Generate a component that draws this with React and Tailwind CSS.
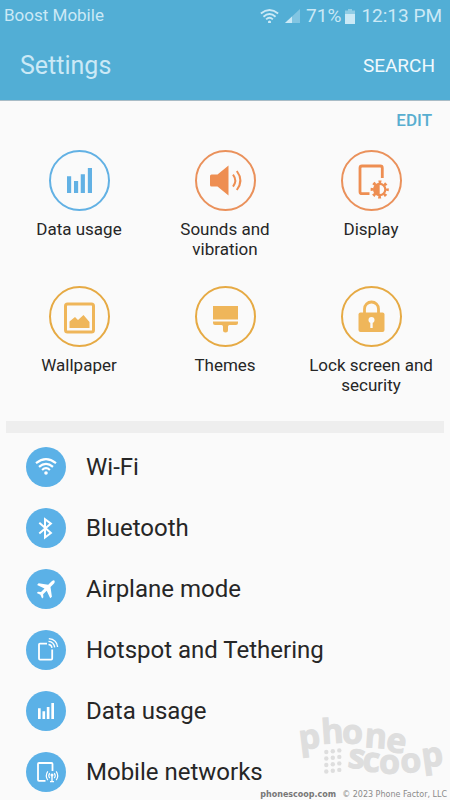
const WifiIcon = ({ className }) => (
    <svg viewBox="0 0 22 17" className={className} fill="none" stroke="currentColor" strokeWidth="2.2" aria-hidden="true">
        <path d="M1 5.2 Q11 -2.8 21 5.2" />
        <path d="M4 8.9 Q11 2.9 18 8.9" />
        <path d="M7.1 12 Q11 8.4 14.9 12" />
        <circle cx="11" cy="15" r="1.8" fill="currentColor" stroke="none" />
    </svg>
);

const BarsIcon = ({ className }) => (
    <svg viewBox="0 0 24 24" className={className} fill="currentColor" aria-hidden="true">
        <path d="M0 8h4v16H0zM6.7 12.5h4V24h-4zM13.2 6h4v18h-4zM20 0h4v24h-4z" />
    </svg>
);

const SoundIcon = () => (
    <svg viewBox="2 2 57 57" className="size-full text-[#ee8e52]" fill="none" stroke="currentColor" strokeWidth="2" aria-hidden="true">
        <path d="M16.5 24.5h6L33.5 15.5v30L22.5 36.5h-6a1.5 1.5 0 0 1-1.5-1.5v-9a1.5 1.5 0 0 1 1.5-1.5z" fill="currentColor" stroke="none" />
        <path d="M38 24.6q4.6 6 0 12M41.8 21q7.2 9.5 0 19" />
    </svg>
);

const DisplayIcon = () => (
    <svg viewBox="2 2 57 57" className="size-full text-[#ee8e52]" fill="none" stroke="currentColor" strokeWidth="2.8" aria-hidden="true">
        <path d="M28.5 43.7H21a2 2 0 0 1-2-2V18a2 2 0 0 1 2-2h18.3a2 2 0 0 1 2 2V28" />
        <circle cx="38.7" cy="39.5" r="5.6" strokeWidth="2.2" />
        <circle cx="38.7" cy="39.5" r="7.6" strokeWidth="3" strokeDasharray="2.8 3.169" strokeDashoffset="1.4" />
        <path d="M38.7 33.9a5.6 5.6 0 0 0 0 11.2z" fill="currentColor" stroke="none" />
    </svg>
);

const WallpaperIcon = () => (
    <svg viewBox="2 2 57 57" className="size-full text-[#efb65a]" fill="none" stroke="currentColor" aria-hidden="true">
        <rect x="16.5" y="18" width="28" height="28" rx="2" strokeWidth="3" />
        <path d="M20.5 35.500l5.500-4.500 3 3 5.500-5 6 7v6H20.500z" fill="currentColor" stroke="none" />
    </svg>
);

const ThemesIcon = () => (
    <svg viewBox="2 2 57 57" className="size-full text-[#efb65a]" fill="currentColor" aria-hidden="true">
        <path d="M18 20h25v13.500H18zM18 35.500h25v1.500a2 2 0 0 1-2 2h-6.500a1.500 1.500 0 0 0-1.500 1.500V44a2.500 2.500 0 0 1-5 0v-3.500a1.500 1.500 0 0 0-1.500-1.500H20a2 2 0 0 1-2-2z" />
    </svg>
);

const LockIcon = () => (
    <svg viewBox="2 2 57 57" className="size-full text-[#efb65a]" fill="none" stroke="currentColor" aria-hidden="true">
        <path d="M23.5 28v-5a7 7 0 0 1 14 0v5" strokeWidth="2.8" />
        <rect x="17.5" y="26.5" width="26" height="19.5" rx="2" fill="currentColor" stroke="none" />
        <circle cx="30.5" cy="34" r="3" fill="#fafafa" stroke="none" />
        <path d="M30.5 35v7" stroke="#fafafa" strokeWidth="2.4" />
    </svg>
);

const BluetoothIcon = () => (
    <svg viewBox="0 0 40 40" className="size-full" fill="none" stroke="currentColor" strokeWidth="2" strokeLinejoin="miter" aria-hidden="true">
        <path d="M13.3 14.800L24.900 25l-5.900 4.500V11.200l5.900 4.400L13.300 25.600" />
    </svg>
);

const PlaneIcon = () => (
    <svg viewBox="0 0 40 40" className="size-full" fill="currentColor" aria-hidden="true">
        <path d="M28.3 11.400c.9 1 .3 2.500-.8 3.600l-3 3 1.400 9.700-1.700 1.500-3.500-7.500-3.600 3.500.3 3-1.300 1.200-1.700-3.600-3.600-1.700 1.200-1.300 3 .3 3.500-3.600-7.400-3.500 1.500-1.700 9.600 1.400 3-3c1-1 2.300-2 3.100-1.300z" />
    </svg>
);

const HotspotIcon = () => (
    <svg viewBox="0 0 40 40" className="size-full" fill="none" stroke="currentColor" strokeWidth="1.8" aria-hidden="true">
        <path d="M21 13.600h-7a1 1 0 0 0-1 1v14a1 1 0 0 0 1 1h11.200a1 1 0 0 0 1-1V19.500" />
        <path d="M22.5 14.500q3 .2 3.500 3.300M22.500 11.400q5.500.5 6.200 6M22.800 8.600q8 .7 8.800 8.400" strokeWidth="1.4" />
    </svg>
);

const NetworkIcon = () => (
    <svg viewBox="0 0 40 40" className="size-full" fill="none" stroke="currentColor" strokeWidth="1.8" aria-hidden="true">
        <path d="M19.5 28.800H13a1 1 0 0 1-1-1V12a1 1 0 0 1 1-1h12.500a1 1 0 0 1 1 1v7" />
        <path d="M23.7 21.200q-1.800 2.500 0 5M28.300 21.200q1.800 2.500 0 5M21.800 19.300q-3 4.400 0 8.800M30.200 19.300q3 4.400 0 8.800" strokeWidth="1.2" />
        <circle cx="26" cy="23" r="1.5" fill="currentColor" stroke="none" />
        <path d="M26 23v6.500M24 29.600h4" strokeWidth="1.4" />
    </svg>
);

const quickSettings = [
    { label: "Data usage", ring: "border-[#62b1e4] text-[#62b1e4]", icon: <BarsIcon className="mx-auto mt-4 size-[25px]" /> },
    { label: "Sounds and vibration", ring: "border-[#ea915b]", icon: <SoundIcon /> },
    { label: "Display", ring: "border-[#ea915b]", icon: <DisplayIcon /> },
    { label: "Wallpaper", ring: "border-[#e6aa44]", icon: <WallpaperIcon /> },
    { label: "Themes", ring: "border-[#e6aa44]", icon: <ThemesIcon /> },
    { label: "Lock screen and security", ring: "border-[#e6aa44]", icon: <LockIcon /> },
];

const settings = [
    { label: "Wi-Fi", icon: <WifiIcon className="w-[22px]" /> },
    { label: "Bluetooth", icon: <BluetoothIcon /> },
    { label: "Airplane mode", icon: <PlaneIcon /> },
    { label: "Hotspot and Tethering", icon: <HotspotIcon /> },
    { label: "Data usage", icon: <BarsIcon className="size-4" /> },
    { label: "Mobile networks", icon: <NetworkIcon /> },
];

const StatusBar = () => (
    <div className="flex h-8 items-center justify-between pr-2 pl-1 text-[#cbe9f6]">
        <span className="text-[17px]">Boost Mobile</span>
        <div className="flex items-center gap-1.5 text-[19px]">
            <WifiIcon className="w-[19px]" />
            <svg viewBox="0 0 15 14" className="w-[15px]" fill="currentColor" aria-hidden="true">
                <path d="M15 0v14H0z" opacity=".4" />
                <path d="M7 7.500V14H0z" />
            </svg>
            <div className="flex items-center gap-1">
                <span>71%</span>
                <svg viewBox="0 0 10 15" className="w-2.5" fill="currentColor" aria-hidden="true">
                    <path d="M3 0h4v1.500h3V5H0V1.500h3z" opacity=".5" />
                    <path d="M0 5h10v10H0z" />
                </svg>
            </div>
            <span>12:13 PM</span>
        </div>
    </div>
);

const Watermark = () => (
    <div className="pointer-events-none absolute right-0 bottom-0 flex flex-col items-end">
        <svg viewBox="0 0 190 100" className="w-[190px] font-['Open_Sans',sans-serif] font-bold" fill="#dedede" aria-label="phone scoop">
            <g fontSize="34" stroke="#dedede" strokeWidth="1">
                <text x="40 62 82 104 125" y="59 53 53 56 60" rotate="-7 -4 0 4 8">phone</text>
                <text x="87 102 119 141 163" y="76 80 83 82 77" rotate="8 4 0 -4 -8">scoop</text>
            </g>
            {[0, 1, 2, 3].map(row =>
                [0, 1, 2].map(col => (
                    <circle key={`${row}-${col}`} cx={66.3 + col * 6.5} cy={61 + row * 6.5 - col * 0.8} r="2.2" />
                ))
            )}
        </svg>
        <p className="flex h-[9px] items-start gap-1.5 pr-[3px] font-['DejaVu_Sans',sans-serif] text-[8px] leading-none text-[#8a8a8a]">
            <b className="text-[#777777]">phonescoop.com</b>
            <span>© 2023 Phone Factor, LLC</span>
        </p>
    </div>
);

const App = () => {
    return (
        <div className="relative flex h-dvh flex-col overflow-hidden bg-[#fafafa] font-[Roboto,sans-serif] text-[#262626]">
            <header className="shrink-0 border-b border-[#a9bcc6] bg-[#52aed5]">
                <StatusBar />
                <div className="flex h-[68px] items-center justify-between pr-[15px] pl-5">
                    <h1 className="text-[25px] text-[#cbe9f6]">Settings</h1>
                    <button type="button" className="text-[19px] text-[#f0f9fd]">SEARCH</button>
                </div>
            </header>

            <main className="flex-1 overflow-y-auto [scrollbar-width:none]">
                <div className="flex h-[49px] items-start justify-end pt-[7px] pr-[18px]">
                    <button type="button" className="text-[17px] leading-6 font-medium text-[#58aed0]">EDIT</button>
                </div>

                <section className="grid grid-cols-3 gap-y-[27px] px-1.5 pb-[26px]">
                    {quickSettings.map(item => (
                        <a key={item.label} href="#" className="flex flex-col items-center gap-2">
                            <span className={`size-[61px] rounded-full border-2 ${item.ring}`}>{item.icon}</span>
                            <span className="w-[136px] text-center text-[17px] leading-5">{item.label}</span>
                        </a>
                    ))}
                </section>

                <div className="mx-1.5 h-3 bg-[#eeeeee]" />

                <nav className="pt-[3px]">
                    {settings.map(item => (
                        <a key={item.label} href="#" className="flex h-[61px] items-center gap-5 pl-[26px]">
                            <span className="flex size-10 items-center justify-center rounded-full bg-[#5bb1e7] text-white">
                                {item.icon}
                            </span>
                            <span className="text-[24px]">{item.label}</span>
                        </a>
                    ))}
                </nav>
            </main>

            <Watermark />
        </div>
    );
};

export default App;
